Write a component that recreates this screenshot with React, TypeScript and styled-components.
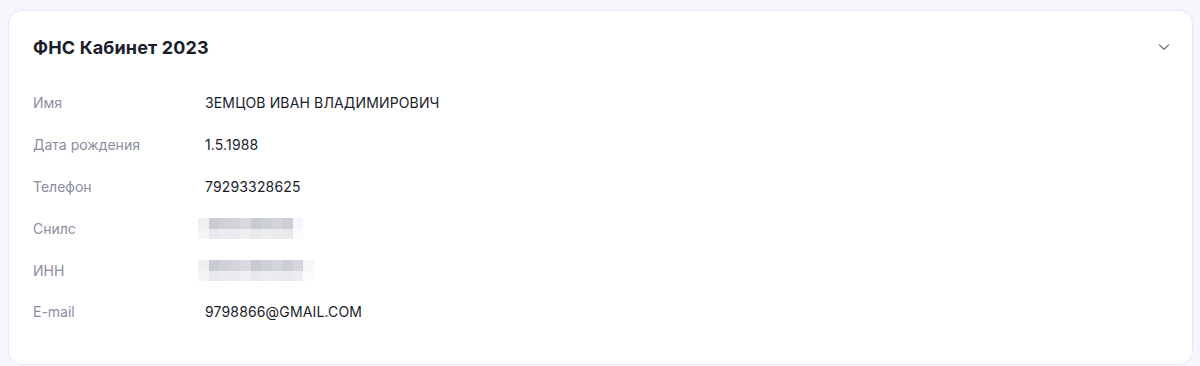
import React from "react";
import styled, { createGlobalStyle } from "styled-components";

const Global = createGlobalStyle`
  html, body { margin: 0; padding: 0; background: #f6f7fc; }
  body { padding: 10px 7px 0 8px; font-family: "Inter", "Noto Sans", sans-serif; }
`;

const Card = styled.section`
  background: #ffffff;
  border: 1px solid #e7e8f0;
  border-radius: 14px;
  height: 355px;
  box-sizing: border-box;
  padding: 0 24px 0 24px;
`;

const Header = styled.div`
  display: flex;
  align-items: center;
  justify-content: space-between;
  height: 72px;
`;

const Title = styled.h2`
  margin: 0;
  font-size: 18px;
  font-weight: 700;
  color: #1b1d2a;
  letter-spacing: 0.15px;
`;

const Chevron = styled.svg`
  width: 14px;
  height: 14px;
  margin-right: -3px;
`;

const Rows = styled.div`
  display: flex;
  flex-direction: column;
  margin-top: -1px;
`;

const Row = styled.div`
  display: grid;
  grid-template-columns: 172px 1fr;
  align-items: center;
  height: 41.8px;
  font-size: 14px;
`;

const Label = styled.span`
  color: #8a8d9f;
`;

const Value = styled.span`
  color: #1b1d2a;
  letter-spacing: 0.15px;
`;

const Blur = styled.div<{ $w: number; $cols: number }>`
  width: ${(p) => p.$w}px;
  height: 21px;
  margin-left: -7px;
  display: grid;
  grid-template-columns: repeat(${(p) => p.$cols}, 1fr);
  grid-template-rows: 11px 10px;
`;

const Cell = styled.div<{ $c: string }>`
  background: ${(p) => p.$c};
`;

const topColors = ["#f2eeee", "#c9ccd4", "#cfd1d7", "#d2d4da", "#d8dadf", "#c8cad0", "#cdd0d6", "#d3d5da", "#cbced5", "#d4d6db", "#e3e4e8", "#f6f6f8"];
const botColors = ["#f5f5f6", "#e7e8eb", "#ebecee", "#eaebee", "#eeeff0", "#e8e9ec", "#ebeced", "#eaebed", "#e8e9ec", "#ecedef", "#f2f2f4", "#fafafb"];

function Pixelated({ w, cols }: { w: number; cols: number }) {
  const cells: React.ReactNode[] = [];
  for (let r = 0; r < 2; r++) {
    for (let c = 0; c < cols; c++) {
      const col = r === 0 ? topColors[c % topColors.length] : botColors[c % botColors.length];
      const edge = c === cols - 1 ? (r === 0 ? "#f7f7f9" : "#fbfbfc") : col;
      cells.push(<Cell key={`${r}-${c}`} $c={edge} />);
    }
  }
  return (
    <Blur $w={w} $cols={cols}>
      {cells}
    </Blur>
  );
}

const rows: { label: string; value?: string; blur?: { w: number; cols: number } }[] = [
  { label: "Имя", value: "ЗЕМЦОВ ИВАН ВЛАДИМИРОВИЧ" },
  { label: "Дата рождения", value: "1.5.1988" },
  { label: "Телефон", value: "79293328625" },
  { label: "Снилс", blur: { w: 105, cols: 10 } },
  { label: "ИНН", blur: { w: 116, cols: 11 } },
  { label: "E-mail", value: "9798866@GMAIL.COM" },
];

export default function App() {
  return (
    <>
      <Global />
      <Card>
        <Header>
          <Title>ФНС Кабинет 2023</Title>
          <Chevron viewBox="0 0 14 14" fill="none">
            <path d="M2.5 5L7 9.2L11.5 5" stroke="#7b7f93" strokeWidth="1.5" strokeLinecap="round" strokeLinejoin="round" />
          </Chevron>
        </Header>
        <Rows>
          {rows.map((r) => (
            <Row key={r.label}>
              <Label>{r.label}</Label>
              {r.blur ? <Pixelated w={r.blur.w} cols={r.blur.cols} /> : <Value>{r.value}</Value>}
            </Row>
          ))}
        </Rows>
      </Card>
    </>
  );
}
